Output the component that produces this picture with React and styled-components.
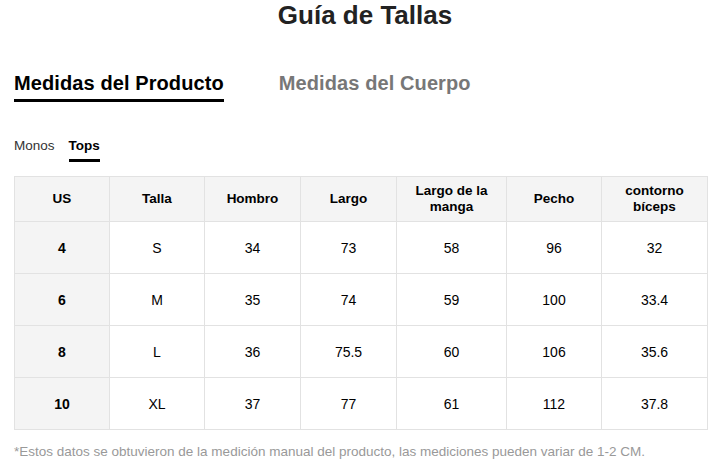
import React, { useState } from "react";
import styled, { createGlobalStyle } from "styled-components";

const GlobalStyle = createGlobalStyle`
  body {
    margin: 0;
    background: #fff;
    font-family: "Liberation Sans", Arial, sans-serif;
    color: #222;
  }
`;

const Page = styled.div`
  padding: 0 10px 0 14px;
`;

const Title = styled.h2`
  margin: 0;
  padding-left: 9px;
  font-size: 26px;
  line-height: 30px;
  font-weight: bold;
  text-align: center;
  color: #222;
`;

const TabBar = styled.div`
  display: flex;
  gap: 55px;
  margin-top: 40px;
`;

const Tab = styled.div`
  font-size: 20px;
  font-weight: bold;
  letter-spacing: 0.1px;
  line-height: 26px;
  padding-bottom: 3px;
  color: ${(p) => (p.$active ? "#000" : "#777")};
  border-bottom: 3px solid ${(p) => (p.$active ? "#000" : "transparent")};
  cursor: pointer;
`;

const SubTabBar = styled.div`
  display: flex;
  gap: 14px;
  margin-top: 35px;
`;

const SubTab = styled.div`
  font-size: 13.5px;
  line-height: 18px;
  padding-bottom: 4px;
  font-weight: ${(p) => (p.$active ? "bold" : "normal")};
  color: ${(p) => (p.$active ? "#000" : "#333")};
  border-bottom: 3px solid ${(p) => (p.$active ? "#000" : "transparent")};
  cursor: pointer;
`;

const Table = styled.table`
  margin-top: 14px;
  border-collapse: collapse;
  table-layout: fixed;
  width: 693px;
`;

const Th = styled.th`
  background: #f4f4f4;
  border: 1px solid #e2e2e2;
  height: 44px;
  padding: 0 8px;
  font-size: 13.5px;
  line-height: 16px;
  font-weight: bold;
  color: #000;
  text-align: center;
`;

const Td = styled.td`
  background: ${(p) => (p.$lead ? "#f4f4f4" : "#fff")};
  border: 1px solid #e2e2e2;
  height: 51px;
  padding: 0 8px;
  font-size: 14px;
  font-weight: ${(p) => (p.$lead ? "bold" : "normal")};
  color: #000;
  text-align: center;
`;

const Note = styled.p`
  margin: 14px 0 0;
  font-size: 13.5px;
  color: #999;
`;

const columns = [
  { label: "US", width: 95 },
  { label: "Talla", width: 95 },
  { label: "Hombro", width: 96 },
  { label: "Largo", width: 96 },
  { label: "Largo de la manga", width: 110 },
  { label: "Pecho", width: 95 },
  { label: "contorno bíceps", width: 106 },
];

const rows = [
  ["4", "S", "34", "73", "58", "96", "32"],
  ["6", "M", "35", "74", "59", "100", "33.4"],
  ["8", "L", "36", "75.5", "60", "106", "35.6"],
  ["10", "XL", "37", "77", "61", "112", "37.8"],
];

export default function App() {
  const [tab, setTab] = useState(0);
  const [sub, setSub] = useState(1);
  return (
    <Page>
      <GlobalStyle />
      <Title>Guía de Tallas</Title>
      <TabBar>
        {["Medidas del Producto", "Medidas del Cuerpo"].map((t, i) => (
          <Tab key={t} $active={tab === i} onClick={() => setTab(i)}>
            {t}
          </Tab>
        ))}
      </TabBar>
      <SubTabBar>
        {["Monos", "Tops"].map((t, i) => (
          <SubTab key={t} $active={sub === i} onClick={() => setSub(i)}>
            {t}
          </SubTab>
        ))}
      </SubTabBar>
      <Table>
        <colgroup>
          {columns.map((c) => (
            <col key={c.label} style={{ width: c.width }} />
          ))}
        </colgroup>
        <thead>
          <tr>
            {columns.map((c) => (
              <Th key={c.label}>{c.label}</Th>
            ))}
          </tr>
        </thead>
        <tbody>
          {rows.map((r) => (
            <tr key={r[0]}>
              {r.map((v, i) => (
                <Td key={i} $lead={i === 0}>
                  {v}
                </Td>
              ))}
            </tr>
          ))}
        </tbody>
      </Table>
      <Note>
        *Estos datos se obtuvieron de la medición manual del producto, las
        mediciones pueden variar de 1-2 CM.
      </Note>
    </Page>
  );
}
